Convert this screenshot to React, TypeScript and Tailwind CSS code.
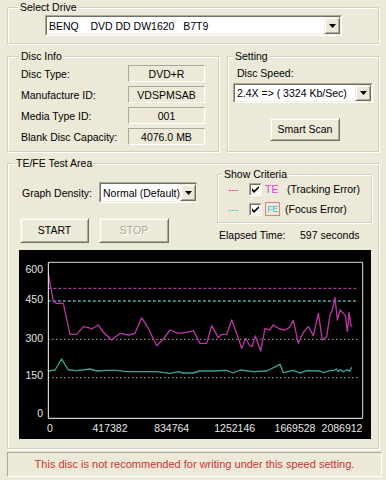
import type { ReactNode } from "react";

const tePoints =
  "145,85 160,170 170,175 190,175 210,268 230,268 250,245 265,248 275,252 295,240 310,262 335,285 360,265 385,270 405,265 425,218 445,250 470,302 490,282 510,255 535,265 560,262 580,257 600,295 620,295 635,242 655,278 665,268 680,268 695,225 712,270 725,310 737,280 748,300 756,305 766,273 782,318 795,250 808,255 820,240 838,252 855,255 868,248 880,226 895,295 910,262 925,245 940,272 955,205 967,285 980,275 990,210 997,195 1005,158 1012,225 1020,195 1030,205 1036,212 1042,260 1047,202 1053,242 1057,245";

const fePoints =
  "145,378 165,375 185,342 205,375 230,377 270,372 290,378 320,376 350,376 380,380 420,380 470,380 510,385 535,380 550,384 580,384 600,378 640,378 680,376 700,384 720,375 760,380 800,378 840,358 850,383 880,376 900,384 920,377 960,378 970,383 990,377 1000,377 1010,372 1015,380 1020,374 1030,380 1040,375 1050,378 1055,367";

function Group({ label, labelLeft, className, children }: { label: string; labelLeft: string; className: string; children?: ReactNode }) {
  return (
    <div className={`relative border border-[#D0D0BF] shadow-[inset_1px_1px_0_#fff,1px_1px_0_#fff] ${className}`}>
      <span className={`absolute -top-[7px] bg-[#ECE9D8] px-[2px] leading-[12px] ${labelLeft}`}>{label}</span>
      {children}
    </div>
  );
}

function Arrow() {
  return (
    <svg width="7" height="4" viewBox="0 0 7 4">
      <path d="M0 0h7L3.5 4z" fill="#000" />
    </svg>
  );
}

function Combo({ text, className }: { text: string; className: string }) {
  return (
    <div className={`flex border border-t-[#ACA899] border-l-[#ACA899] border-r-white border-b-white ${className}`}>
      <div className="flex flex-1 border border-t-[#716F64] border-l-[#716F64] border-r-[#F1EFE2] border-b-[#F1EFE2] bg-white">
        <span className="flex-1 self-center whitespace-pre pl-[2px] leading-[12px]">{text}</span>
        <div className="flex w-[16px] items-center justify-center border border-t-[#F1EFE2] border-l-[#F1EFE2] border-r-[#716F64] border-b-[#716F64] bg-[#ECE9D8] shadow-[inset_1px_1px_0_#fff,inset_-1px_-1px_0_#ACA899]">
          <Arrow />
        </div>
      </div>
    </div>
  );
}

function Button({ text, className, disabled }: { text: string; className: string; disabled?: boolean }) {
  return (
    <div
      className={`flex items-center justify-center border border-t-[#F1EFE2] border-l-[#F1EFE2] border-r-[#716F64] border-b-[#716F64] bg-[#ECE9D8] shadow-[inset_1px_1px_0_#fff,inset_-1px_-1px_0_#ACA899] ${className} ${
        disabled ? "text-[#ACA899] [text-shadow:1px_1px_0_#fff]" : "text-black"
      }`}
    >
      {text}
    </div>
  );
}

function Check() {
  return (
    <div className="h-[13px] w-[13px] border border-t-[#ACA899] border-l-[#ACA899] border-r-white border-b-white">
      <div className="flex h-full w-full items-center justify-center border border-t-[#716F64] border-l-[#716F64] border-r-[#F1EFE2] border-b-[#F1EFE2] bg-white">
        <svg width="7" height="7" viewBox="0 0 7 7">
          <path d="M0 2v3l2 2 5-5V0L2 4.5z" fill="#000" />
        </svg>
      </div>
    </div>
  );
}

function InfoRow({ label, value }: { label: string; value: string }) {
  return (
    <>
      <span className="self-center leading-[12px]">{label}</span>
      <div className="flex h-[17px] items-center justify-center border border-t-[#ACA899] border-l-[#ACA899] border-r-white border-b-white leading-[12px]">
        {value}
      </div>
    </>
  );
}

function Chart() {
  const font = "'Liberation Sans', Arial, sans-serif";
  return (
    <svg width="352" height="189" viewBox="57 15 1056 567" className="block">
      <rect x="57" y="15" width="1056" height="567" fill="#000" />
      <line x1="145" y1="52" x2="1088" y2="52" stroke="#d8d8d8" strokeWidth="3" />
      <line x1="1088" y1="52" x2="1088" y2="520" stroke="#d8d8d8" strokeWidth="3" />
      <line x1="145" y1="130" x2="1072" y2="130" stroke="#c050b8" strokeWidth="3" strokeDasharray="9 6" />
      <line x1="145" y1="168" x2="1072" y2="168" stroke="#50b8b8" strokeWidth="3" strokeDasharray="9 6" />
      <line x1="145" y1="168" x2="1072" y2="168" stroke="#ffffff" strokeWidth="3" strokeDasharray="3 12" />
      <line x1="145" y1="283" x2="1072" y2="283" stroke="#ffffff" strokeWidth="3" strokeDasharray="3 9" />
      <line x1="145" y1="398" x2="1072" y2="398" stroke="#ffffff" strokeWidth="3" strokeDasharray="3 9" />
      <polyline points={fePoints} fill="none" stroke="#3fa393" strokeWidth="4" strokeLinejoin="round" />
      <polyline points={tePoints} fill="none" stroke="#b8389e" strokeWidth="4" strokeLinejoin="round" />
      <line x1="145" y1="52" x2="145" y2="520" stroke="#ffffff" strokeWidth="3" />
      <line x1="145" y1="520" x2="1088" y2="520" stroke="#ffffff" strokeWidth="3" />
      <g fill="#e6e6e6" fontSize="31.5" fontFamily={font} dominantBaseline="central">
        <text x="129" y="72" textAnchor="end">600</text>
        <text x="129" y="162" textAnchor="end">450</text>
        <text x="129" y="278" textAnchor="end">300</text>
        <text x="129" y="390" textAnchor="end">150</text>
        <text x="129" y="505" textAnchor="end">0</text>
        <text x="150" y="548" textAnchor="middle">0</text>
        <text x="330" y="548" textAnchor="middle">417382</text>
        <text x="515" y="548" textAnchor="middle">834764</text>
        <text x="704" y="548" textAnchor="middle">1252146</text>
        <text x="885" y="548" textAnchor="middle">1669528</text>
        <text x="1026" y="548" textAnchor="middle">2086912</text>
      </g>
    </svg>
  );
}

export default function App() {
  return (
    <div className="h-[480px] w-[386px] overflow-hidden bg-[#ECE9D8] px-[7px] font-['Liberation_Sans',Arial,sans-serif] text-[10.5px] text-black">
      <Group label="Select Drive" labelLeft="left-[10px]" className="mt-[7px] h-[37px]">
        <div className="pl-[37px] pt-[7px]">
          <Combo text="BENQ    DVD DD DW1620   B7T9" className="h-[21px] w-[297px]" />
        </div>
      </Group>

      <div className="mt-[12px] flex h-[96px]">
        <Group label="Disc Info" labelLeft="left-[11px]" className="h-full w-[212px]">
          <div className="grid grid-cols-[107px_77px] gap-y-[4px] pl-[13px] pt-[8px]">
            <InfoRow label="Disc Type:" value="DVD+R" />
            <InfoRow label="Manufacture ID:" value="VDSPMSAB" />
            <InfoRow label="Media Type ID:" value="001" />
            <InfoRow label="Blank Disc Capacity:" value="4076.0 MB" />
          </div>
        </Group>
        <Group label="Setting" labelLeft="left-[5px]" className="ml-[8px] h-full w-[152px]">
          <div className="flex flex-col pl-[5px] pt-[10px]">
            <span className="ml-[4px] leading-[12px]">Disc Speed:</span>
            <Combo text="2.4X => ( 3324 Kb/Sec)" className="mt-[4px] h-[20px] w-[140px]" />
            <Button text="Smart Scan" className="ml-[37px] mt-[15px] h-[23px] w-[70px]" />
          </div>
        </Group>
      </div>

      <Group label="TE/FE Test Area" labelLeft="left-[6px]" className="mt-[11px] h-[286px]">
        <div className="flex h-[86px]">
          <div className="flex w-[209px] flex-col pl-[12px] pt-[18px]">
            <div className="flex items-center">
              <span className="ml-[2px] w-[77px] leading-[12px]">Graph Density:</span>
              <Combo text="Normal (Default)" className="h-[21px] w-[98px]" />
            </div>
            <div className="mt-[15px] flex gap-[10px]">
              <Button text="START" className="h-[25px] w-[69px]" />
              <Button text="STOP" className="h-[25px] w-[70px]" disabled />
            </div>
          </div>
          <div className="flex flex-col pt-[10px]">
            <Group label="Show Criteria" labelLeft="left-[4px]" className="h-[49px] w-[155px]">
              <div className="flex flex-col gap-[6px] pl-[10px] pt-[7px]">
                <div className="flex h-[14px] items-center">
                  <span className="w-[21px] leading-[12px] text-[#d040c0]">---</span>
                  <Check />
                  <span className="ml-[3px] w-[22px] leading-[12px] text-[#e040d8]">TE</span>
                  <span className="leading-[12px]">(Tracking Error)</span>
                </div>
                <div className="flex h-[14px] items-center">
                  <span className="w-[21px] leading-[12px] text-[#40d0d0]">---</span>
                  <Check />
                  <div className="ml-[3px] flex h-[14px] w-[15px] items-center justify-center border border-[#d88080] bg-[#ECE9D8]">
                    <span className="text-[9px] leading-[10px] tracking-[-0.5px] text-[#30c8c8]">FE</span>
                  </div>
                  <span className="ml-[5px] leading-[12px]">(Focus Error)</span>
                </div>
              </div>
            </Group>
            <div className="ml-[2px] mt-[6px] flex leading-[12px]">
              <span className="w-[81px]">Elapsed Time:</span>
              <span>597 seconds</span>
            </div>
          </div>
        </div>
        <div className="ml-[11px] w-[352px]">
          <Chart />
        </div>
      </Group>

      <div className="mt-[3px] flex h-[25px] w-[375px] items-center justify-center border border-t-[#ACA899] border-l-[#ACA899] border-r-white border-b-white text-[11px] text-[#cc3333]">
        This disc is not recommended for writing under this speed setting.
      </div>
    </div>
  );
}
